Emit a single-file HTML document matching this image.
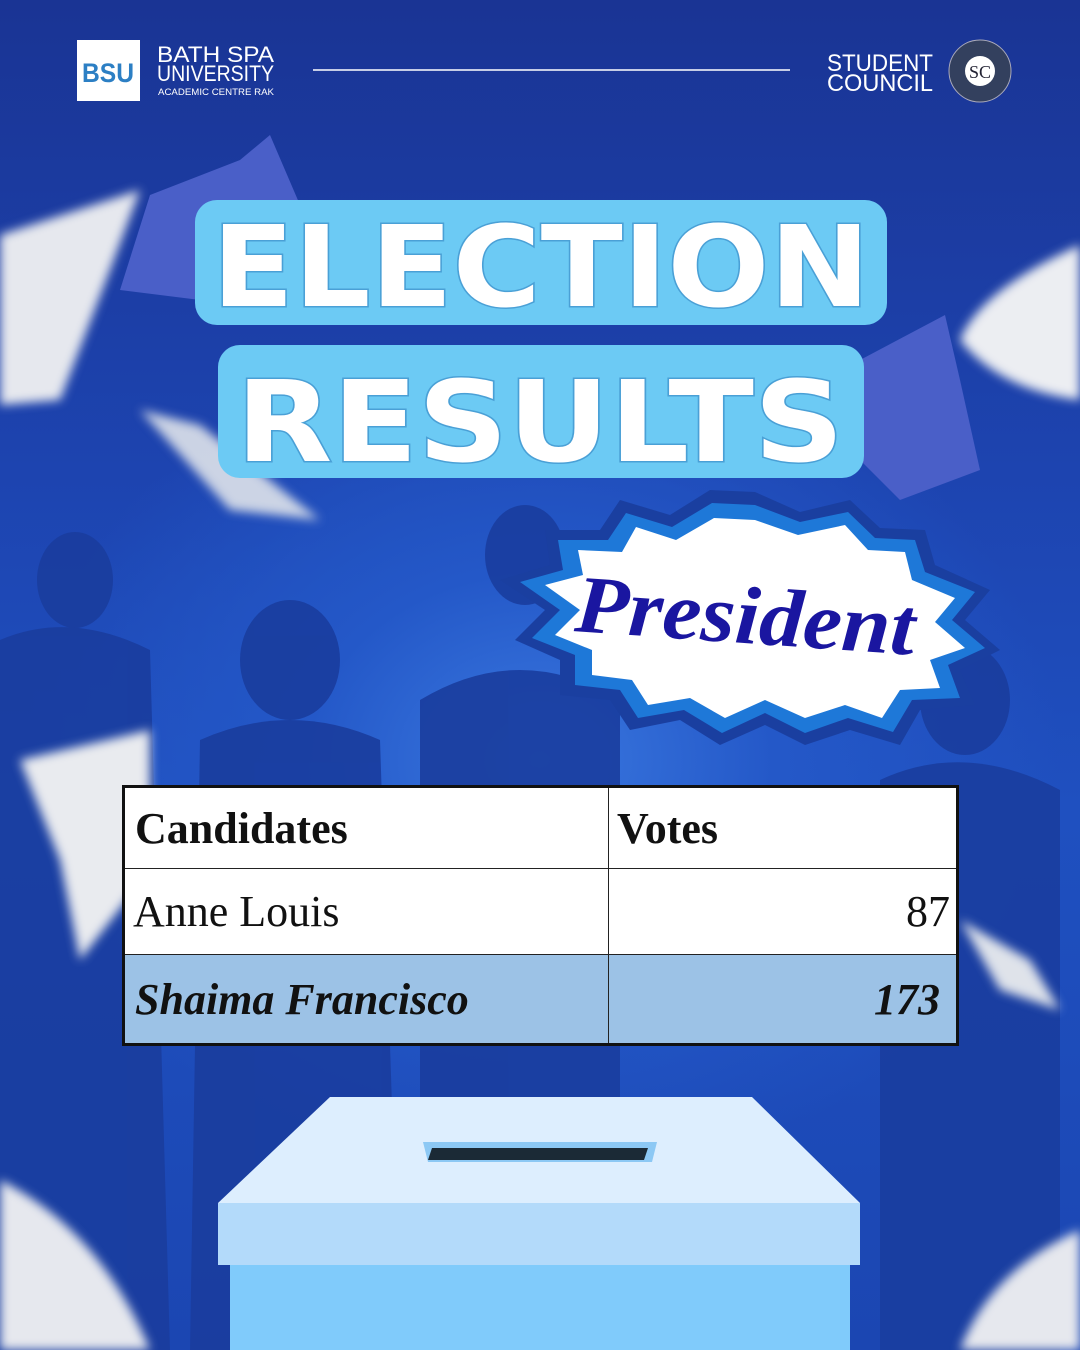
<!DOCTYPE html>
<html><head><meta charset="utf-8"><style>
html,body{margin:0;padding:0}
body{width:1080px;height:1350px;overflow:hidden;position:relative;font-family:"Liberation Sans",sans-serif;
background:radial-gradient(ellipse 520px 420px at 540px 760px,#3a78e0 0%,#2458c8 45%,rgba(30,70,180,0) 100%),linear-gradient(#1a3494 0%,#1d44b0 35%,#1f50c0 60%,#1b46b2 100%);}
.abs{position:absolute}
</style></head><body>
<svg class="abs" style="left:0;top:0" width="1080" height="1350">
 <defs><filter id="b" x="-20%" y="-20%" width="140%" height="140%"><feGaussianBlur stdDeviation="5"/></filter></defs>
 <g fill="#1a3d9e" opacity="0.9">
  <ellipse cx="75" cy="580" rx="38" ry="48"/><path d="M0 640 Q70 610 150 650 L170 1350 L0 1350Z"/>
  <ellipse cx="290" cy="660" rx="50" ry="60"/><path d="M200 740 Q290 700 380 740 L400 1350 L190 1350Z"/>
  <ellipse cx="525" cy="555" rx="40" ry="50"/><path d="M420 700 Q520 640 620 700 L620 1100 L420 1100Z"/>
  <ellipse cx="965" cy="700" rx="45" ry="55"/><path d="M880 780 Q965 740 1060 790 L1060 1350 L880 1350Z"/>
 </g>
 <path d="M150 195 L240 160 L270 135 L300 205 L200 300 L120 290Z" fill="#4a5fc8"/>
 <path d="M860 360 L945 315 L960 380 L980 470 L900 500 L850 450Z" fill="#4a5fc8"/>
 <g filter="url(#b)">
 <path d="M0 235 L140 190 L110 270 L60 400 L0 405Z" fill="#e6e8ee"/>
 <path d="M140 410 L200 425 L320 520 L230 510Z" fill="#dfe3ea" opacity="0.9"/>
 <path d="M20 760 L150 730 L150 870 L80 960 L60 860Z" fill="#e9ebef"/>
 <path d="M1080 245 Q980 290 960 340 Q1000 390 1080 400Z" fill="#eceef2"/>
 <path d="M960 920 L1030 960 L1060 1010 L1000 990Z" fill="#dfe3ea"/>
 <path d="M0 1180 Q100 1230 150 1350 L0 1350Z" fill="#e6e8ee"/>
 <path d="M1080 1230 Q990 1270 960 1350 L1080 1350Z" fill="#e6e8ee"/>
 </g>
 <line x1="313" y1="70" x2="790" y2="70" stroke="#fff" stroke-width="1.5"/>
 <rect x="77" y="40" width="63" height="61" fill="#fff"/>
 <text x="108" y="82" text-anchor="middle" font-family="Liberation Sans" font-weight="bold" font-size="27" fill="#2c7fc4" textLength="52" lengthAdjust="spacingAndGlyphs">BSU</text>
 <text x="157" y="62" font-family="Liberation Sans" font-size="22" fill="#fff" textLength="117" lengthAdjust="spacingAndGlyphs">BATH SPA</text>
 <text x="157" y="81" font-family="Liberation Sans" font-size="22" fill="#fff" textLength="117" lengthAdjust="spacingAndGlyphs">UNIVERSITY</text>
 <text x="158" y="95" font-family="Liberation Sans" font-size="9" fill="#fff" textLength="116" lengthAdjust="spacingAndGlyphs">ACADEMIC CENTRE RAK</text>
 <text x="827" y="71" font-family="Liberation Sans" font-size="24" fill="#fff" textLength="106" lengthAdjust="spacingAndGlyphs">STUDENT</text>
 <text x="827" y="91" font-family="Liberation Sans" font-size="24" fill="#fff" textLength="106" lengthAdjust="spacingAndGlyphs">COUNCIL</text>
 <circle cx="980" cy="71" r="31" fill="#33405e" stroke="#aab" stroke-width="1"/>
 <circle cx="980" cy="71" r="15" fill="#fff"/>
 <text x="980" y="78" text-anchor="middle" font-family="Liberation Serif" font-size="18" fill="#223">SC</text>
 <rect x="195" y="200" width="692" height="125" rx="22" fill="#6ccaf4"/>
 <rect x="218" y="345" width="646" height="133" rx="22" fill="#6ccaf4"/>
 <g font-family="DejaVu Sans" font-weight="bold" fill="#fff" stroke="#4aa0d6" stroke-width="3" paint-order="stroke">
  <text x="212" y="306" font-size="112" textLength="658" lengthAdjust="spacingAndGlyphs">ELECTION</text>
  <text x="236" y="461" font-size="112" textLength="608" lengthAdjust="spacingAndGlyphs">RESULTS</text>
 </g>
 <polygon fill="#1a3fa0" points="755,492 800,512 850,500 880,528 925,530 935,565 990,590 965,620 1000,650 960,670 975,705 920,710 900,745 850,730 805,745 765,725 720,745 680,720 630,730 610,700 560,695 560,660 515,640 545,610 500,580 550,565 545,530 600,530 620,500 670,515 710,490"/>
 <polygon fill="#1e78d8" points="755,505 800,522 848,512 875,538 915,540 925,572 975,592 952,620 985,648 948,665 960,698 912,700 893,732 848,718 805,733 765,713 722,733 684,710 638,718 620,690 575,685 575,655 532,638 560,610 520,582 563,570 558,540 608,540 626,513 672,527 712,503"/>
 <polygon fill="#fff" points="755,520 798,535 845,525 868,550 905,552 912,580 955,598 935,622 965,648 930,660 940,688 900,690 882,718 845,705 805,718 765,700 725,718 690,698 648,705 632,680 592,675 592,650 555,635 580,610 545,585 583,575 578,550 622,552 636,527 676,540 714,518"/>
 <text x="745" y="643" text-anchor="middle" font-family="Liberation Serif" font-style="italic" font-weight="bold" font-size="82" fill="#1a16a0" textLength="340" lengthAdjust="spacingAndGlyphs" transform="rotate(4 745 620)">President</text>
 <polygon points="330,1097 752,1097 860,1203 218,1203" fill="#ddeefe"/>
 <polygon points="423,1142 657,1142 652,1162 428,1162" fill="#8cc8f4"/>
 <polygon points="432,1148 648,1148 644,1160 428,1160" fill="#1b2a36"/>
 <rect x="218" y="1203" width="642" height="62" fill="#b3dafa"/>
 <rect x="230" y="1265" width="620" height="85" fill="#80cbfb"/>
</svg>
<table class="abs" style="left:122px;top:785px;width:837px;height:261px;border-collapse:collapse;font-family:'Liberation Serif',serif;font-size:44px;color:#111;border:3px solid #111">
<tr style="height:82px;background:#fff"><td style="border:1.5px solid #222;padding:0 10px;width:463px;font-weight:bold">Candidates</td><td style="border:1.5px solid #222;padding:0 8px;font-weight:bold">Votes</td></tr>
<tr style="height:86px;background:#fff"><td style="border:1.5px solid #222;padding:0 8px">Anne Louis</td><td style="border:1.5px solid #222;padding:0 6px;text-align:right">87</td></tr>
<tr style="height:90px;background:#9cc2e6"><td style="border:1.5px solid #222;padding:0 10px;font-weight:bold;font-style:italic">Shaima Francisco</td><td style="border:1.5px solid #222;padding:0 16px;text-align:right;font-weight:bold;font-style:italic">173</td></tr>
</table>
</body></html>
